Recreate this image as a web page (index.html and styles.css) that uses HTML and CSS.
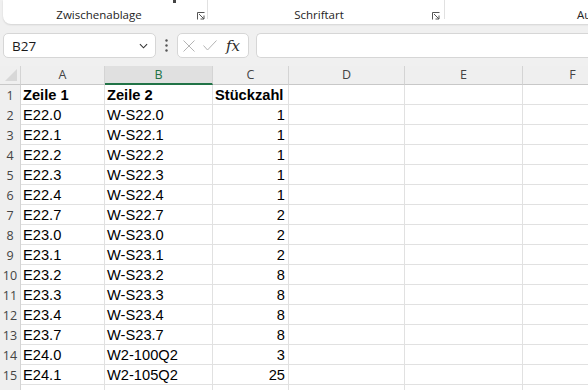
FILE: index.html
```html
<!DOCTYPE html>
<html lang="de">
<head>
  <meta charset="UTF-8" />
  <title>Mappe1 - Excel</title>
  <link rel="stylesheet" href="styles.css">
</head>
<body>

  <div class="ribbon">
    <div class="group g-clip">
      <span class="tick"></span>
      <span class="label">Zwischenablage</span>
      <svg class="launcher" viewBox="0 0 8 8"><path d="M0.5 7.5V0.5H7.5M2 2L7 7M3.5 7H7V3.5" /></svg>
    </div>
    <div class="sep"></div>
    <div class="group g-font">
      <span class="label">Schriftart</span>
      <svg class="launcher" viewBox="0 0 8 8"><path d="M0.5 7.5V0.5H7.5M2 2L7 7M3.5 7H7V3.5" /></svg>
    </div>
    <div class="sep"></div>
    <div class="group g-align">
      <span class="label">Ausrichtung</span>
    </div>
  </div>

  <div class="formula-row">
    <div class="name-box">
      <span>B27</span>
      <svg class="chevron" viewBox="0 0 10 6"><path d="M1 1L5 5L9 1" /></svg>
    </div>
    <svg class="dots" viewBox="0 0 3 13"><circle cx="1.5" cy="1.5" r="1.2"/><circle cx="1.5" cy="6.5" r="1.2"/><circle cx="1.5" cy="11.5" r="1.2"/></svg>
    <div class="fx-box">
      <svg class="icon-x" viewBox="0 0 12 12"><path d="M0.5 0.5L11.5 11.5M11.5 0.5L0.5 11.5" /></svg>
      <svg class="icon-check" viewBox="0 0 14 11"><path d="M0.5 5.5L4.5 10L13.5 0.5" /></svg>
      <span class="fx">fx</span>
    </div>
    <div class="formula-input"></div>
  </div>

  <div class="sheet">
    <div class="corner"><svg viewBox="0 0 12 12"><path d="M12 0V12H0Z" /></svg></div>
    <div class="col-head">A</div>
    <div class="col-head active">B</div>
    <div class="col-head">C</div>
    <div class="col-head">D</div>
    <div class="col-head">E</div>
    <div class="col-head">F</div>

    <div class="row-head">1</div>
    <div class="cell bold">Zeile 1</div><div class="cell bold">Zeile 2</div><div class="cell bold">Stückzahl</div><div class="cell"></div><div class="cell"></div><div class="cell"></div>
    <div class="row-head">2</div>
    <div class="cell">E22.0</div><div class="cell">W-S22.0</div><div class="cell num">1</div><div class="cell"></div><div class="cell"></div><div class="cell"></div>
    <div class="row-head">3</div>
    <div class="cell">E22.1</div><div class="cell">W-S22.1</div><div class="cell num">1</div><div class="cell"></div><div class="cell"></div><div class="cell"></div>
    <div class="row-head">4</div>
    <div class="cell">E22.2</div><div class="cell">W-S22.2</div><div class="cell num">1</div><div class="cell"></div><div class="cell"></div><div class="cell"></div>
    <div class="row-head">5</div>
    <div class="cell">E22.3</div><div class="cell">W-S22.3</div><div class="cell num">1</div><div class="cell"></div><div class="cell"></div><div class="cell"></div>
    <div class="row-head">6</div>
    <div class="cell">E22.4</div><div class="cell">W-S22.4</div><div class="cell num">1</div><div class="cell"></div><div class="cell"></div><div class="cell"></div>
    <div class="row-head">7</div>
    <div class="cell">E22.7</div><div class="cell">W-S22.7</div><div class="cell num">2</div><div class="cell"></div><div class="cell"></div><div class="cell"></div>
    <div class="row-head">8</div>
    <div class="cell">E23.0</div><div class="cell">W-S23.0</div><div class="cell num">2</div><div class="cell"></div><div class="cell"></div><div class="cell"></div>
    <div class="row-head">9</div>
    <div class="cell">E23.1</div><div class="cell">W-S23.1</div><div class="cell num">2</div><div class="cell"></div><div class="cell"></div><div class="cell"></div>
    <div class="row-head">10</div>
    <div class="cell">E23.2</div><div class="cell">W-S23.2</div><div class="cell num">8</div><div class="cell"></div><div class="cell"></div><div class="cell"></div>
    <div class="row-head">11</div>
    <div class="cell">E23.3</div><div class="cell">W-S23.3</div><div class="cell num">8</div><div class="cell"></div><div class="cell"></div><div class="cell"></div>
    <div class="row-head">12</div>
    <div class="cell">E23.4</div><div class="cell">W-S23.4</div><div class="cell num">8</div><div class="cell"></div><div class="cell"></div><div class="cell"></div>
    <div class="row-head">13</div>
    <div class="cell">E23.7</div><div class="cell">W-S23.7</div><div class="cell num">8</div><div class="cell"></div><div class="cell"></div><div class="cell"></div>
    <div class="row-head">14</div>
    <div class="cell">E24.0</div><div class="cell">W2-100Q2</div><div class="cell num">3</div><div class="cell"></div><div class="cell"></div><div class="cell"></div>
    <div class="row-head">15</div>
    <div class="cell">E24.1</div><div class="cell">W2-105Q2</div><div class="cell num">25</div><div class="cell"></div><div class="cell"></div><div class="cell"></div>
    <div class="row-head"></div>
    <div class="cell"></div><div class="cell"></div><div class="cell"></div><div class="cell"></div><div class="cell"></div><div class="cell"></div>
  </div>

</body>
</html>
```

FILE: styles.css
```css
:root {
  --app-bg: #f0f0f0;
  --head-bg: #efefef;
  --grid: #e1e1e1;
  --head-line: #d4d4d4;
  --green: #217346;
  --ui-font: "Open Sans", "Noto Sans", sans-serif;
}

* {
  margin: 0;
  padding: 0;
  box-sizing: border-box;
}

body {
  background: var(--app-bg);
  overflow: hidden;
  height: 100vh;
  font-family: var(--ui-font);
  color: #262626;
}

/* ribbon (only the bottom strip is visible) */

.ribbon {
  display: flex;
  height: 24px;
  margin-left: 3px;
  width: 700px;
  background: #fff;
  border-radius: 0 0 0 8px;
  box-shadow: 0 1px 2px rgba(0, 0, 0, 0.12);
}

.group {
  display: flex;
  align-items: flex-start;
  height: 24px;
  position: relative;
}

.g-clip { width: 204px; }
.g-font { width: 236px; }
.g-align { flex: 1; }

.label {
  flex: 1;
  text-align: center;
  font-size: 11.5px;
  line-height: 16px;
  padding-top: 7px;
  color: #242424;
  white-space: nowrap;
}

.g-align .label {
  flex: none;
  padding-left: 132px;
  text-align: left;
}

.tick {
  position: absolute;
  left: 170px;
  top: 0;
  width: 3px;
  height: 3px;
  background: #444;
}

.launcher {
  width: 8px;
  height: 8px;
  margin: 12px 2px 0 2px;
  fill: none;
  stroke: #555;
  stroke-width: 1;
}

.g-font .launcher { margin-right: 4px; }

.sep {
  width: 1px;
  height: 19px;
  background: #e1e1e1;
}

/* name box + formula bar */

.formula-row {
  display: flex;
  align-items: center;
  height: 25px;
  margin-top: 9px;
  padding-left: 3px;
}

.name-box {
  width: 153px;
  height: 25px;
  display: flex;
  align-items: center;
  justify-content: space-between;
  padding: 0 7px 0 8px;
  background: #fff;
  border: 1px solid #d6d6d6;
  border-radius: 5px;
  font-size: 13.5px;
  color: #1a1a1a;
}

.chevron {
  width: 9px;
  height: 6px;
  fill: none;
  stroke: #333;
  stroke-width: 1.2;
}

.dots {
  width: 3px;
  height: 13px;
  margin: 0 9px 0 9px;
  fill: #555;
}

.fx-box {
  width: 72px;
  height: 25px;
  display: flex;
  align-items: center;
  padding-left: 5px;
  background: #fff;
  border: 1px solid #d6d6d6;
  border-radius: 5px;
}

.icon-x {
  width: 12px;
  height: 12px;
  fill: none;
  stroke: #b4b4b4;
  stroke-width: 1;
}

.icon-check {
  width: 14px;
  height: 11px;
  margin-left: 8px;
  fill: none;
  stroke: #b4b4b4;
  stroke-width: 1;
}

.fx {
  font-family: "DejaVu Serif", "Liberation Serif", serif;
  font-style: italic;
  font-size: 15px;
  margin-left: 9px;
  color: #2b2b2b;
}

.formula-input {
  flex: 1;
  height: 25px;
  margin-left: 7px;
  background: #fff;
  border: 1px solid #d6d6d6;
  border-right: none;
  border-radius: 5px 0 0 5px;
}

/* sheet grid */

.sheet {
  display: grid;
  grid-template-columns: 21px 84px 108px 76px 116px 118px 100px;
  grid-template-rows: 19px;
  grid-auto-rows: 20px;
  margin-top: 8px;
}

.corner {
  display: flex;
  align-items: flex-end;
  justify-content: flex-end;
  padding: 0 3px 3px 0;
  background: var(--head-bg);
  border-right: 1px solid var(--head-line);
  border-bottom: 1px solid #c8c8c8;
}

.corner svg {
  width: 12px;
  height: 12px;
  fill: #d8d8d8;
}

.col-head {
  background: var(--head-bg);
  border-right: 1px solid var(--head-line);
  border-bottom: 1px solid #c8c8c8;
  text-align: center;
  font-size: 12.5px;
  line-height: 18px;
  color: #444;
}

.col-head.active {
  background: #e0e0e0;
  color: var(--green);
  border-bottom: 2px solid var(--green);
}

.row-head {
  background: var(--head-bg);
  border-right: 1px solid var(--head-line);
  text-align: center;
  font-size: 12.5px;
  line-height: 21px;
  color: #444;
}

.cell {
  background: #fff;
  border-right: 1px solid var(--grid);
  border-bottom: 1px solid var(--grid);
  font-family: "Liberation Sans", Arial, sans-serif;
  font-size: 14.67px;
  line-height: 21px;
  padding: 0 3px 0 2px;
  color: #000;
  white-space: nowrap;
  overflow: hidden;
}

.cell.bold { font-weight: bold; }
.cell.num { text-align: right; }
```
